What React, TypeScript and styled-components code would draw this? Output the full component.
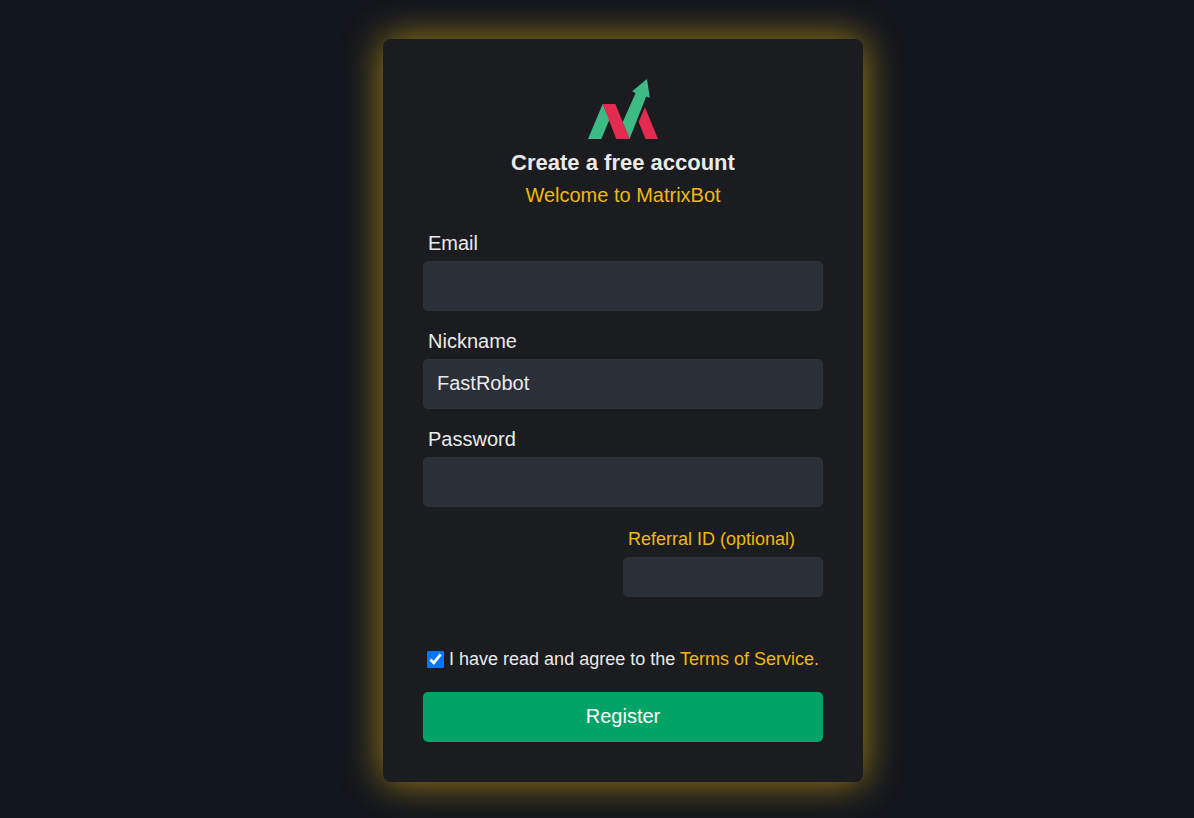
import React from "react";
import styled, { createGlobalStyle } from "styled-components";

const GlobalStyle = createGlobalStyle`
  *, *::before, *::after { box-sizing: border-box; }
  body {
    margin: 0;
    background: #12161d;
    color: #eaeaea;
    font-family: "Liberation Sans", Arial, sans-serif;
    font-size: 20px;
  }
`;

const Page = styled.main`
  display: flex;
  justify-content: center;
  padding: 39px 0 36px 52px;
`;

const Card = styled.form`
  display: flex;
  flex-direction: column;
  width: 100%;
  max-width: 480px;
  padding: 40px;
  border-radius: 8px;
  background: #1b1c20;
  box-shadow: 0 0 38px #a88416;
`;

const Header = styled.header`
  display: flex;
  flex-direction: column;
  align-items: center;
  margin-bottom: 16px;
  text-align: center;
`;

const Logo = styled.svg`
  display: block;
  width: 70px;
  height: 60px;
`;

const Title = styled.h1`
  margin: 8px 0 0;
  font-size: 22px;
  line-height: 32px;
`;

const Welcome = styled.p`
  margin: 0;
  color: #f0b90b;
  line-height: 32px;
`;

const Fields = styled.div`
  display: flex;
  flex-direction: column;
  gap: 14px;
`;

const Field = styled.div<{ $compact?: boolean }>`
  display: flex;
  flex-direction: column;
  gap: 2px;
  ${({ $compact }) =>
    $compact && "width: 50%; margin-top: 16px; align-self: flex-end;"}
`;

const Label = styled.label<{ $accent?: boolean }>`
  padding-left: 5px;
  line-height: 32px;
  color: ${({ $accent }) => ($accent ? "#f0b90b" : "inherit")};
  font-size: ${({ $accent }) => ($accent ? "18px" : "20px")};
`;

const Input = styled.input<{ $compact?: boolean }>`
  width: 100%;
  height: ${({ $compact }) => ($compact ? "40px" : "50px")};
  padding: 0 13px 2px;
  border: 1px solid #2f3333;
  border-radius: 5px;
  outline: none;
  background: #2b2f37;
  color: #eaeaea;
  font: inherit;
`;

const Terms = styled.div`
  display: flex;
  align-items: center;
  justify-content: center;
  gap: 5px;
  margin: 50px 0 20px;
  font-size: 18px;
  line-height: 25px;
  white-space: nowrap;
`;

const Checkbox = styled.input`
  flex: none;
  width: 17px;
  height: 17px;
  margin: 0;
`;

const TermsLink = styled.a`
  color: #f0b90b;
  text-decoration: none;
`;

const RegisterButton = styled.button`
  height: 50px;
  padding: 0 6px 2px;
  border: 0;
  border-radius: 5px;
  background: #02a367;
  color: #fff;
  font: inherit;
  cursor: pointer;
`;

export default function App() {
  return (
    <>
      <GlobalStyle />
      <Page>
        <Card onSubmit={(event) => event.preventDefault()}>
          <Header>
            <Logo viewBox="0 0 70 60" role="img" aria-label="MatrixBot">
              <path fill="#3dbb85" d="M0 60 14.7 25 21.5 40.5 13.3 60Z" />
              <path
                fill="#3dbb85"
                d="M41.5 60 34.6 43.3 47.6 14.3 44.2 12.3 59 0 61.8 18.8 58.2 17.5Z"
              />
              <path fill="#e22b4e" d="M14.7 25H27.3L41.8 60H28.3Z" />
              <path fill="#e22b4e" d="M57 28.3 50.6 43 57.6 60H70Z" />
            </Logo>
            <Title>Create a free account</Title>
            <Welcome>Welcome to MatrixBot</Welcome>
          </Header>
          <Fields>
            <Field>
              <Label htmlFor="email">Email</Label>
              <Input id="email" type="email" />
            </Field>
            <Field>
              <Label htmlFor="nickname">Nickname</Label>
              <Input id="nickname" type="text" defaultValue="FastRobot" />
            </Field>
            <Field>
              <Label htmlFor="password">Password</Label>
              <Input id="password" type="password" />
            </Field>
          </Fields>
          <Field $compact>
            <Label htmlFor="referral" $accent>
              Referral ID (optional)
            </Label>
            <Input id="referral" type="text" $compact />
          </Field>
          <Terms>
            <Checkbox id="terms" type="checkbox" defaultChecked />
            <label htmlFor="terms">
              I have read and agree to the{" "}
              <TermsLink href="#terms">Terms of Service.</TermsLink>
            </label>
          </Terms>
          <RegisterButton type="submit">Register</RegisterButton>
        </Card>
      </Page>
    </>
  );
}
